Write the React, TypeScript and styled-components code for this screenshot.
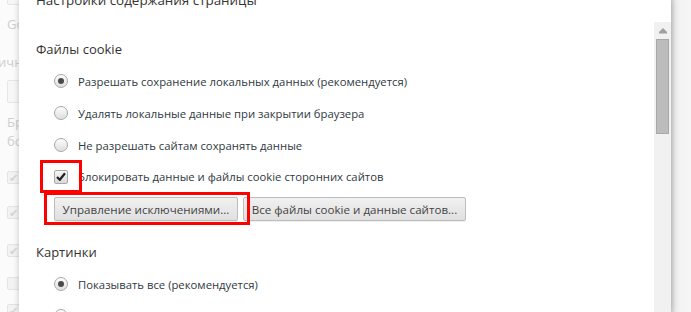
import { createGlobalStyle, styled } from 'styled-components';

const GlobalStyle = createGlobalStyle`
  html, body {
    margin: 0;
    padding: 0;
    background: #f6f6f6;
    overflow: hidden;
  }
  * {
    box-sizing: border-box;
  }
`;

const font = `'Open Sans', 'Noto Sans', 'Liberation Sans', sans-serif`;

const Screen = styled.div`
  display: flex;
  width: 691px;
  height: 312px;
  overflow: hidden;
  font-family: ${font};
`;

/* faded settings page behind the overlay */
const Backdrop = styled.div`
  width: 19px;
  flex-shrink: 0;
  overflow: hidden;
  background: #fbfbfb;
  display: flex;
  flex-direction: column;
  padding-left: 7px;
`;

const GhostBox = styled.div<{ top: number; h: number }>`
  width: 30px;
  height: ${({ h }) => h}px;
  margin-top: ${({ top }) => top}px;
  border: 1px solid #e6e6e6;
  border-radius: 2px;
  background: #f7f7f7;
  flex-shrink: 0;
`;

const GhostText = styled.div<{ top: number; shift?: number }>`
  margin-top: ${({ top }) => top}px;
  margin-left: ${({ shift }) => shift || 0}px;
  font-size: 13px;
  line-height: 18px;
  color: #cfcfcf;
  white-space: nowrap;
`;

const GhostCheck = styled.div<{ top: number }>`
  width: 13px;
  height: 13px;
  margin-top: ${({ top }) => top}px;
  border: 1px solid #e4e4e4;
  border-radius: 2px;
  background: #f3f3f3;
  color: #d6d6d6;
  font-size: 11px;
  line-height: 11px;
  text-align: center;
  flex-shrink: 0;
`;

const Dialog = styled.div`
  flex: 1;
  display: flex;
  background: #fff;
  box-shadow: 0 0 6px rgba(0, 0, 0, 0.22);
  position: relative;
  z-index: 1;
`;

const Content = styled.div`
  flex: 1;
  padding-left: 17px;
  display: flex;
  flex-direction: column;
  color: #333;
`;

const Title = styled.div`
  font-size: 13.4px;
  line-height: 20px;
  margin-top: -10px;
  color: #333;
`;

const Heading = styled.div<{ gap: number }>`
  font-size: 13px;
  line-height: 20px;
  margin-top: ${({ gap }) => gap}px;
  color: #333;
`;

const Options = styled.div`
  display: flex;
  flex-direction: column;
  padding-left: 18px;
`;

const Option = styled.div<{ h?: number }>`
  display: flex;
  align-items: center;
  gap: 10px;
  height: ${({ h }) => h || 32}px;
  font-size: 11.3px;
  color: #303942;
  white-space: nowrap;
`;

const Radio = styled.span<{ checked?: boolean }>`
  width: 14px;
  height: 14px;
  border-radius: 50%;
  border: 1px solid #a9a9a9;
  background: linear-gradient(#fdfdfd, #dedede);
  display: flex;
  align-items: center;
  justify-content: center;
  flex-shrink: 0;

  &::after {
    content: '';
    width: 6px;
    height: 6px;
    border-radius: 50%;
    background: ${({ checked }) => (checked ? '#4a4a4a' : 'transparent')};
  }
`;

const CheckWrap = styled.span`
  position: relative;
  display: flex;
  flex-shrink: 0;
`;

const Checkbox = styled.span`
  width: 14px;
  height: 14px;
  border-radius: 2px;
  border: 1px solid #a9a9a9;
  background: linear-gradient(#f6f6f6, #d9d9d9);
  display: flex;
  align-items: center;
  justify-content: center;
`;

const Highlight = styled.span<{ t: number; r: number; b: number; l: number }>`
  position: absolute;
  top: ${({ t }) => t}px;
  right: ${({ r }) => r}px;
  bottom: ${({ b }) => b}px;
  left: ${({ l }) => l}px;
  border: 3px solid #f00;
  pointer-events: none;
  z-index: 2;
`;

const Buttons = styled.div`
  display: flex;
  gap: 5px;
  margin-top: 5px;
  padding-left: 18px;
`;

const ButtonWrap = styled.div`
  position: relative;
  display: flex;
`;

const Button = styled.button<{ w: number }>`
  width: ${({ w }) => w}px;
  height: 24px;
  padding: 0;
  border: 1px solid #bdbdbd;
  border-radius: 2px;
  background: linear-gradient(#f1f1f1, #e0e0e0);
  box-shadow: 0 1px 0 rgba(0, 0, 0, 0.06);
  font-family: ${font};
  font-size: 11.6px;
  color: #444;
  white-space: nowrap;
`;

const Scrollbar = styled.div`
  width: 17px;
  margin-top: 22px;
  background: #f1f1f1;
  display: flex;
  flex-direction: column;
  align-items: center;
`;

const ArrowBtn = styled.div`
  height: 17px;
  display: flex;
  align-items: center;
  justify-content: center;
`;

const Thumb = styled.div`
  width: 13px;
  height: 95px;
  background: #bcbcbc;
  border: 1px solid #a8a8a8;
`;

const Shade = styled.div`
  width: 20px;
  flex-shrink: 0;
  background: linear-gradient(to right, #d4d4d4 0, #ececec 5px, #f4f4f4 10px, #f6f6f6 100%);
`;

const Check = () => (
  <svg width="10" height="9" viewBox="0 0 10 9">
    <path d="M1 5 L3.8 7.8 L9 1.2" fill="none" stroke="#222" strokeWidth="2.2" />
  </svg>
);

const App = () => {
  return (
    <>
      <GlobalStyle />
      <Screen>
        <Backdrop>
          <GhostBox top={-12} h={17} />
          <GhostText top={10}>Go</GhostText>
          <GhostText top={20} shift={-9}>
            ичн
          </GhostText>
          <GhostBox top={9} h={23} />
          <GhostText top={10}>Бр</GhostText>
          <GhostText top={1}>бо</GhostText>
          <GhostCheck top={21}>✔</GhostCheck>
          <GhostCheck top={22}>✔</GhostCheck>
          <GhostCheck top={25}>✔</GhostCheck>
          <GhostCheck top={20} />
          <GhostCheck top={14}>✔</GhostCheck>
        </Backdrop>
        <Dialog>
          <Content>
            <Title>Настройки содержания страницы</Title>
            <Heading gap={29}>Файлы cookie</Heading>
            <Options>
              <Option style={{ marginTop: 6 }}>
                <Radio checked />
                Разрешать сохранение локальных данных (рекомендуется)
              </Option>
              <Option>
                <Radio />
                Удалять локальные данные при закрытии браузера
              </Option>
              <Option>
                <Radio />
                Не разрешать сайтам сохранять данные
              </Option>
              <Option h={31}>
                <CheckWrap>
                  <Checkbox>
                    <Check />
                  </Checkbox>
                  <Highlight t={-10} r={-14} b={-9} l={-14} />
                </CheckWrap>
                Блокировать данные и файлы cookie сторонних сайтов
              </Option>
            </Options>
            <Buttons>
              <ButtonWrap>
                <Button w={184}>Управление исключениями...</Button>
                <Highlight t={-5} r={-12} b={-4} l={-10} />
              </ButtonWrap>
              <ButtonWrap>
                <Button w={223}>Все файлы cookie и данные сайтов...</Button>
              </ButtonWrap>
            </Buttons>
            <Heading gap={21}>Картинки</Heading>
            <Options>
              <Option style={{ marginTop: 6 }}>
                <Radio checked />
                Показывать все (рекомендуется)
              </Option>
              <Option>
                <Radio />
                Не показывать изображения
              </Option>
            </Options>
          </Content>
          <Scrollbar>
            <ArrowBtn>
              <svg width="8" height="6" viewBox="0 0 8 6">
                <path d="M4 0 L8 4 L0 4 Z" fill="#a0a0a0" />
                <rect x="0" y="4" width="8" height="1.5" fill="#a0a0a0" />
              </svg>
            </ArrowBtn>
            <Thumb />
          </Scrollbar>
        </Dialog>
        <Shade />
      </Screen>
    </>
  );
};

export default App;
